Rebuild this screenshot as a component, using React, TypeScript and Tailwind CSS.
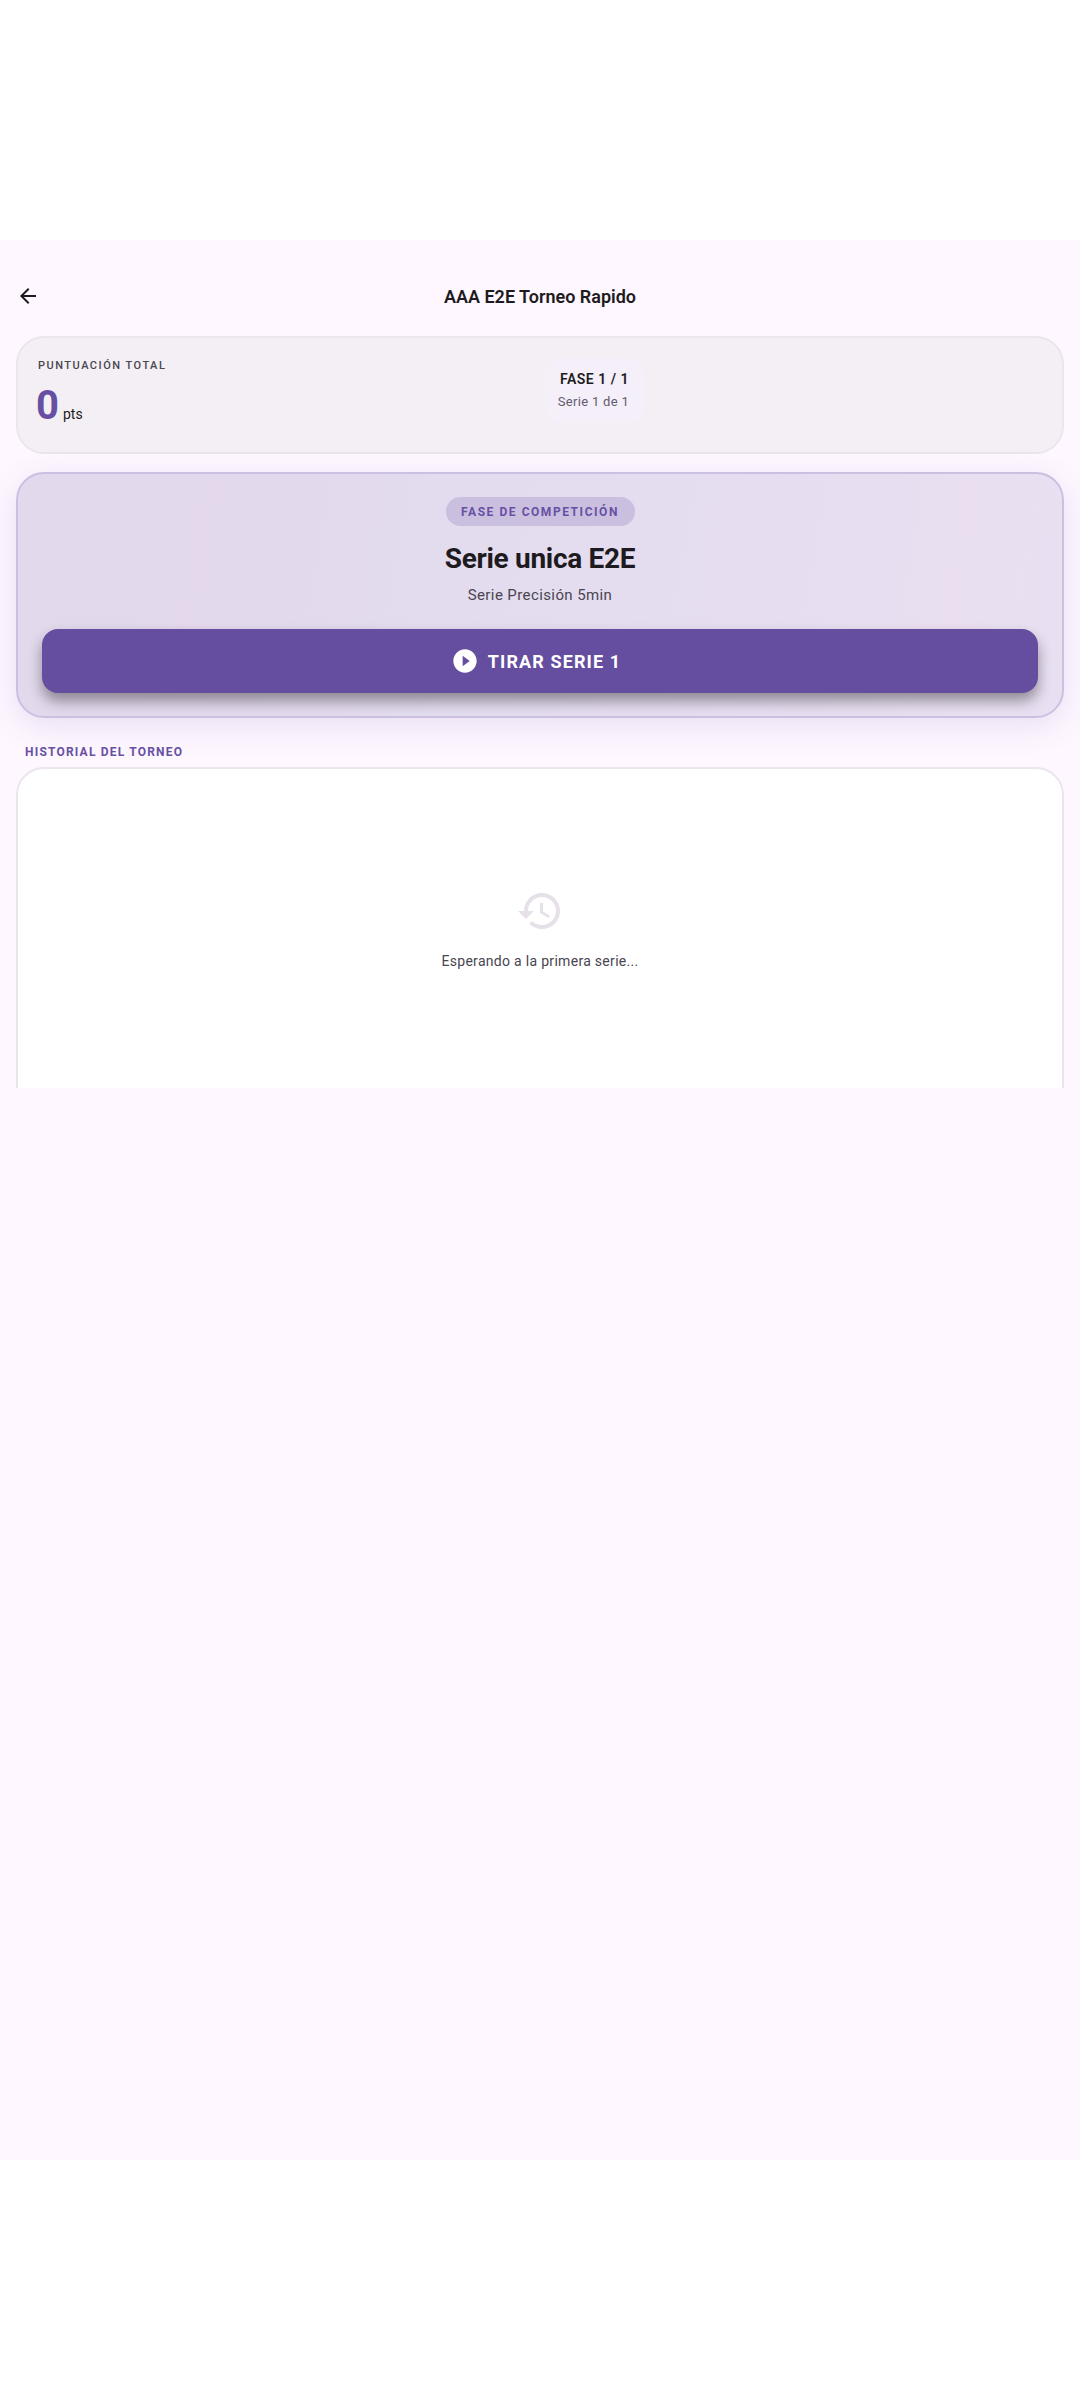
import React from 'react';

function BackIcon() {
  return (
    <svg viewBox="0 0 24 24" className="h-6 w-6 fill-[#1d1b20]">
      <path d="M20 11H7.83l5.59-5.59L12 4l-8 8 8 8 1.41-1.41L7.83 13H20v-2z" />
    </svg>
  );
}

function PlayCircle() {
  return (
    <svg viewBox="0 0 24 24" className="h-7 w-7 fill-white">
      <path d="M12 2C6.48 2 2 6.48 2 12s4.48 10 10 10 10-4.48 10-10S17.52 2 12 2zm-2 14.5v-9l6 4.5-6 4.5z" />
    </svg>
  );
}

function HistoryIcon() {
  return (
    <svg viewBox="0 0 24 24" className="h-12 w-12 fill-[#e6e0e9]">
      <path d="M13 3c-4.97 0-9 4.03-9 9H1l3.89 3.89.07.14L9 12H6c0-3.87 3.13-7 7-7s7 3.13 7 7-3.13 7-7 7c-1.93 0-3.68-.79-4.94-2.06l-1.42 1.42C8.27 19.99 10.51 21 13 21c4.97 0 9-4.03 9-9s-4.03-9-9-9zm-1 5v5l4.28 2.54.72-1.21-3.5-2.08V8H12z" />
    </svg>
  );
}

export default function App() {
  return (
    <div className="h-[2400px] w-[1080px] overflow-hidden bg-white font-['Roboto',sans-serif] text-[#1d1b20]">
      <div className="h-[240px]" />
      <main className="h-[1920px] bg-[#fef7ff]">
        <div className="h-[848px] overflow-hidden">
          <header className="relative flex h-[48px] translate-y-[32px] items-center justify-center">
            <button className="absolute left-4 top-3">
              <BackIcon />
            </button>
            <h1 className="text-[18px] font-semibold">AAA E2E Torneo Rapido</h1>
          </header>

          <div className="px-4 pt-[48px]">
            <section className="grid h-[118px] grid-cols-2 rounded-[28px] border-2 border-[#ebe5ee] bg-[#f3eff5] pl-[20px]">
              <div className="pt-[20px]">
                <p className="text-[11px] font-medium leading-[16px] tracking-[1.5px] text-[#49454f]">PUNTUACIÓN TOTAL</p>
                <p className="mt-[8px] flex items-baseline gap-1">
                  <span className="ml-[-2px] text-[40px] font-bold leading-[48px] text-[#6750a4]">0</span>
                  <span className="text-[14px] text-[#1d1b20]">pts</span>
                </p>
              </div>
              <div className="ml-[-4px] mt-[20px] flex h-[64px] w-[98px] flex-col items-end justify-center rounded-[12px] bg-[#f4eff8] pr-[15px]">
                <p className="text-[14px] font-semibold leading-[20px] tracking-[0.5px]">FASE 1 / 1</p>
                <p className="mt-1 text-[13px] leading-[18px] tracking-[0.3px] text-[#625b71]">Serie 1 de 1</p>
              </div>
            </section>

            <section className="mt-[18px] flex h-[246px] flex-col items-center rounded-[28px] border-2 border-[#cbbfe2] bg-[linear-gradient(100deg,#e2d9ed_0%,#e3d8ec_18%,#e3dbee_40%,#e6ddf0_70%,#e9dff1_88%,#e8e0f2_100%)] px-[24px] pt-[23px] shadow-[0_8px_32px_rgba(103,80,164,0.14)]">
              <span className="flex h-[29px] w-[189px] items-center justify-center rounded-full bg-[#cbbfe0] text-[12px] font-bold tracking-[1.55px] text-[#6750a4]">FASE DE COMPETICIÓN</span>
              <h2 className="mt-[13px] text-[28px] font-bold leading-[40px] tracking-[-0.3px] text-[#1d1b20]">Serie unica E2E</h2>
              <p className="mt-[5px] text-[15px] leading-[22px] tracking-[0.4px] text-[#49454f]">Serie Precisión 5min</p>
              <button className="mt-[23px] flex h-[64px] w-full items-center justify-center gap-[9px] rounded-[16px] bg-[#654ea0] pr-[8px] text-[18px] font-bold tracking-[1.1px] text-white shadow-[0_8px_14px_rgba(0,0,0,0.38)]">
                <PlayCircle />
                TIRAR SERIE 1
              </button>
            </section>

            <h3 className="mt-[27px] pl-[9px] text-[12px] font-bold leading-[14px] tracking-[1.2px] text-[#6750a4]">HISTORIAL DEL TORNEO</h3>

            <section className="mt-[8px] flex h-[500px] flex-col items-center rounded-[28px] border-2 border-[#ebe5ee] bg-white pt-[118px]">
              <HistoryIcon />
              <p className="mt-[16px] text-[14px] leading-[20px] tracking-[0.3px] text-[#49454f]">Esperando a la primera serie...</p>
            </section>
          </div>
        </div>
      </main>
    </div>
  );
}
